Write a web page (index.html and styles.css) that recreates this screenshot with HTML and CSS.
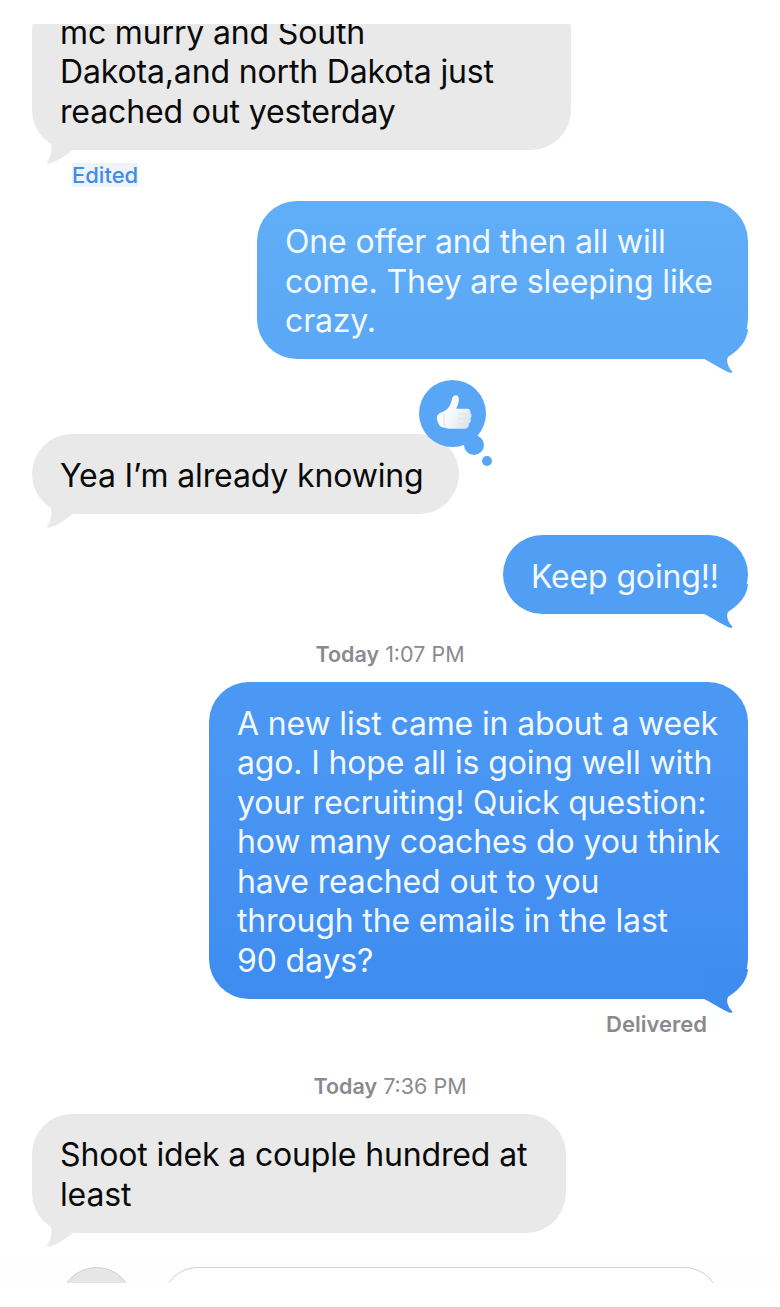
FILE: index.html
```html
<!DOCTYPE html>
<html lang="en">
<head>
    <meta charset="UTF-8">
    <meta name="viewport" content="width=device-width, initial-scale=1.0">
    <title>Messages</title>
    <link rel="stylesheet" href="styles.css">
</head>
<body>

<svg class="defs" width="0" height="0">
    <symbol id="tail-left" viewBox="0 0 44 44">
        <path d="M3 0C5 10 11 17 19 23C20 30 19 38 15 42C15 44 17 44 18 43.500C26 41 33 36 41 30L41 0Z"/>
    </symbol>
    <symbol id="tail-right" viewBox="0 0 44 44">
        <path d="M44 0C43 12 36 20 24 28C22 32 24 38 28 42C29 44 27 44 25 43.500C17 40 10 35 0 30L0 0Z"/>
    </symbol>
    <linearGradient id="hand-shade" x1="0" y1="0" x2="1" y2="0.600">
        <stop offset="0" stop-color="#ffffff"/>
        <stop offset="0.600" stop-color="#f6f8fb"/>
        <stop offset="1" stop-color="#dfe7ee"/>
    </linearGradient>
</svg>

<div class="thread">
    <div class="bubble them first">
        mc murry and South<br>
        Dakota,and north Dakota just<br>
        reached out yesterday
        <svg class="tail tail-them"><use href="#tail-left"/></svg>
    </div>
    <div class="edited-row"><span class="edited">Edited</span></div>

    <div class="bubble me offer">
        One offer and then all will<br>
        come. They are sleeping like<br>
        crazy.
        <svg class="tail tail-offer"><use href="#tail-right"/></svg>
    </div>

    <div class="bubble them knowing">
        Yea I’m already knowing
        <svg class="tail tail-them"><use href="#tail-left"/></svg>
        <div class="tapback">
            <svg class="thumb" viewBox="0 0 34 36">
                <path class="thumb-hand" d="M1 24C0 21 2 18 6 17C11 15 14 11 15 5C16 0 21 0 21.500 4C22 8 20 12 19 14L29 14C32 14 33 16 32.500 18C34 19 34 22 32.500 23C33.500 25 33 27 31 28C31.500 31 29.500 33 27 33L16 33C13 33 11 33 8 32C4 32 2 29 1 24Z"/>
                <path class="thumb-line" d="M21 19H32M21 23.500H32M21 28H30M8 19C7 23 7 27 9 31"/>
            </svg>
            <span class="tapback-dot"></span>
            <span class="tapback-dot small"></span>
        </div>
    </div>

    <div class="bubble me going">
        Keep going!!
        <svg class="tail tail-going"><use href="#tail-right"/></svg>
    </div>

    <div class="stamp first-stamp"><b>Today</b> 1:07 PM</div>

    <div class="bubble me list">
        A new list came in about a week<br>
        ago. I hope all is going well with<br>
        your recruiting! Quick question:<br>
        how many coaches do you think<br>
        have reached out to you<br>
        through the emails in the last<br>
        90 days?
        <svg class="tail tail-list"><use href="#tail-right"/></svg>
    </div>
    <div class="delivered">Delivered</div>

    <div class="stamp second-stamp"><b>Today</b> 7:36 PM</div>

    <div class="bubble them shoot">
        Shoot idek a couple hundred at<br>
        least
        <svg class="tail tail-them"><use href="#tail-left"/></svg>
    </div>

    <div class="input-bar">
        <div class="plus"></div>
        <div class="field"></div>
    </div>
</div>

</body>
</html>
```

FILE: styles.css
```css
body {
    font-family: Inter, "Liberation Sans", sans-serif;
    background-color: #fff;
    margin: 0;
}
.defs {
    display: block;
    height: 0;
}
.thread {
    margin-top: 24px;
    height: 1259px;
    overflow: hidden;
}
.bubble {
    position: relative;
    isolation: isolate;
    box-sizing: border-box;
    padding: 21.500px 0 18.500px 28px;
    border-radius: 40px;
    font-size: 32px;
    line-height: 39.5px;
    letter-spacing: -0.15px;
    white-space: nowrap;
}
.them {
    margin-left: 32px;
    background-color: #e9e9e9;
    color: #0a0a0a;
}
.me {
    margin-left: auto;
    margin-right: 32px;
    color: #f2f8ff;
}
.tail {
    position: absolute;
    z-index: -1;
    bottom: -14px;
    width: 44px;
    height: 44px;
}
.tail-them {
    left: 0;
    fill: #e9e9e9;
}
.tail-offer {
    right: 0;
    fill: #5aa8f6;
}
.tail-going {
    right: 0;
    fill: #519ff5;
}
.tail-list {
    right: 0;
    fill: #3f8cf1;
}
.first {
    width: 539px;
    margin-top: -33px;
}
.edited-row {
    height: 24px;
    margin: 13px 0 14px 72px;
}
.edited {
    display: inline-block;
    font-size: 22px;
    line-height: 24px;
    font-weight: 500;
    color: #3f8de4;
    background-color: #eef3f9;
}
.offer {
    width: 491px;
    background: linear-gradient(#60aef7, #5aa8f6);
}
.knowing {
    width: 427px;
    height: 80px;
    margin-top: 75px;
}
.tapback {
    position: absolute;
    left: 387px;
    top: -54px;
    width: 67px;
    height: 67px;
    border-radius: 50%;
    background-color: #58a6f5;
}
.thumb {
    display: block;
    position: absolute;
    left: 17px;
    top: 14px;
    width: 36px;
    height: 38px;
}
.thumb-hand {
    fill: url(#hand-shade);
}
.thumb-line {
    fill: none;
    stroke: #dde5ec;
    stroke-width: 1.200;
}
.tapback-dot {
    position: absolute;
    left: 45px;
    top: 55px;
    width: 20px;
    height: 20px;
    border-radius: 50%;
    background-color: #58a6f5;
}
.tapback-dot.small {
    left: 63px;
    top: 76px;
    width: 10px;
    height: 10px;
}
.going {
    width: 245px;
    height: 79px;
    margin-top: 21px;
    background-color: #519ff5;
}
.stamp {
    height: 28px;
    font-size: 21.500px;
    line-height: 28px;
    text-align: center;
    color: #8a8a8e;
}
.stamp b {
    font-weight: 600;
}
.first-stamp {
    margin-top: 26px;
}
.list {
    width: 539px;
    margin-top: 14px;
    background: linear-gradient(#4c99f4, #3f8cf1);
}
.delivered {
    height: 24px;
    margin: 13px 73px 0 0;
    font-size: 22px;
    line-height: 24px;
    font-weight: 600;
    text-align: right;
    color: #8a8a8e;
}
.second-stamp {
    margin-top: 36px;
}
.shoot {
    width: 534px;
    margin-top: 14px;
}
.input-bar {
    display: flex;
    gap: 29px;
    height: 60px;
    margin-top: 8px;
    padding: 26px 0 0 60px;
    background: linear-gradient(#fff, #fcfcfc);
}
.plus {
    flex: none;
    width: 73px;
    height: 73px;
    box-sizing: border-box;
    border: 1px solid #cfcfcf;
    border-radius: 50%;
    background-color: #e6e6e6;
}
.field {
    width: 558px;
    height: 73px;
    box-sizing: border-box;
    border: 1px solid #d0d0d0;
    border-radius: 36px;
    background-color: #fff;
}
```
